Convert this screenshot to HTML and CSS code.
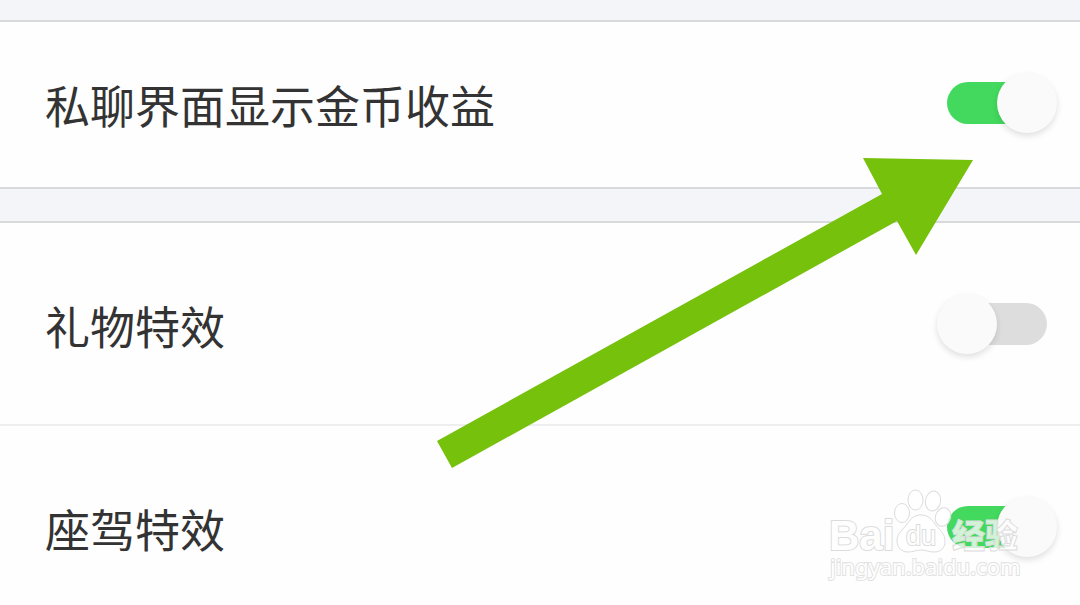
FILE: index.html
```html
<!DOCTYPE html>
<html lang="zh-CN">
<head>
<meta charset="utf-8">
<meta name="viewport" content="width=device-width, initial-scale=1">
<title>设置</title>
<link rel="stylesheet" href="styles.css">
</head>
<body>
<main class="settings">
  <section class="group">
    <div class="row row-compact">
      <label class="row-label" for="coins">私聊界面显示金币收益</label>
      <input class="switch" type="checkbox" role="switch" id="coins" checked>
    </div>
  </section>
  <section class="group">
    <div class="row">
      <label class="row-label" for="gift">礼物特效</label>
      <input class="switch" type="checkbox" role="switch" id="gift">
    </div>
    <div class="row">
      <label class="row-label" for="ride">座驾特效</label>
      <input class="switch" type="checkbox" role="switch" id="ride" checked>
    </div>
  </section>

  <svg class="arrow" viewBox="0 0 540 312" aria-hidden="true">
    <path d="M2 283 447 36 428 0 538 2 481 97 462 63 17 310Z"/>
  </svg>

  <svg class="watermark" viewBox="0 0 210 100" role="img" aria-label="Baidu 经验">
    <g class="mark">
      <text class="mark-latin" x="5" y="61">Bai</text>
      <ellipse cx="78" cy="24" rx="7.500" ry="9.500"/>
      <ellipse cx="91.500" cy="11" rx="7.500" ry="10"/>
      <ellipse cx="109" cy="12" rx="7.500" ry="10" transform="rotate(12 109 12)"/>
      <ellipse cx="119" cy="28" rx="7.500" ry="9.500" transform="rotate(18 119 28)"/>
      <path d="M97 26c-8 0-11 5-14 9-4 6-10 9-10 17 0 7 5 11 11 11 5 0 8-2 13-2s8 2 13 2c7 0 11-4 11-11 0-8-6-11-10-17-3-4-6-9-14-9Z"/>
      <text class="mark-du" x="82" y="56">du</text>
      <text class="mark-cjk" x="128" y="59">经验</text>
      <text class="mark-url" x="6" y="86">jingyan.baidu.com</text>
    </g>
  </svg>
</main>
</body>
</html>
```
FILE: styles.css
```css
* {
  box-sizing: border-box;
}

body {
  margin: 0;
  background: #f4f5f9;
  color: #333;
  font-family: "Noto Sans CJK SC", sans-serif;
}

.settings {
  position: relative;
  min-height: 100vh;
  overflow: hidden;
  display: flex;
  flex-direction: column;
  gap: 32px;
  padding-top: 20px;
}

.group {
  background: #fefefe;
  border-top: 2px solid #d9dadb;
  border-bottom: 2px solid #d9dadb;
}

.group:last-of-type {
  flex: 1;
  margin-bottom: -50px;
  border-bottom: 0;
}

.row {
  display: flex;
  align-items: center;
  justify-content: space-between;
  min-height: 201px;
  padding: 0 33px 0 45px;
}

.row + .row {
  min-height: 203px;
  border-top: 2px solid #eee;
}

.row-compact {
  min-height: 165px;
  padding-bottom: 4px;
}

.row-label {
  padding-top: 4px;
  font-size: 45px;
  line-height: 60px;
}

.switch {
  appearance: none;
  display: flex;
  align-items: center;
  flex: none;
  width: 100px;
  height: 42px;
  margin: 0;
  border-radius: 21px;
  background: #ddd;
}

.switch::before {
  content: "";
  flex: none;
  width: 60px;
  height: 60px;
  margin: 0 -10px;
  border-radius: 50%;
  background: #fafafa;
  box-shadow: 0 3px 6px rgba(0, 0, 0, 0.12);
}

.switch:checked {
  justify-content: flex-end;
  background: #43d95e;
}

.arrow {
  position: absolute;
  top: 158px;
  left: 435px;
  width: 540px;
  height: 312px;
  fill: #76c10c;
  pointer-events: none;
}

.watermark {
  position: absolute;
  top: 489px;
  left: 824px;
  width: 210px;
  height: 100px;
  pointer-events: none;
}

.mark {
  fill: rgba(255, 255, 255, 0.75);
  stroke: #dcdcdc;
  stroke-width: 1px;
}

.mark-latin {
  font: bold 42px "Liberation Sans", sans-serif;
  fill: #fefefe;
  stroke-width: 2px;
  paint-order: stroke;
}

.mark-du {
  font: 27px "Liberation Sans", sans-serif;
  fill: #fefefe;
  stroke-width: 2px;
  paint-order: stroke;
}

.mark-cjk {
  font: 900 33px "Noto Sans CJK SC", sans-serif;
}

.mark-url {
  font: 22px "Noto Sans", sans-serif;
  fill: #fefefe;
  stroke: #e2e2e2;
  stroke-width: 2px;
  paint-order: stroke;
}
```
